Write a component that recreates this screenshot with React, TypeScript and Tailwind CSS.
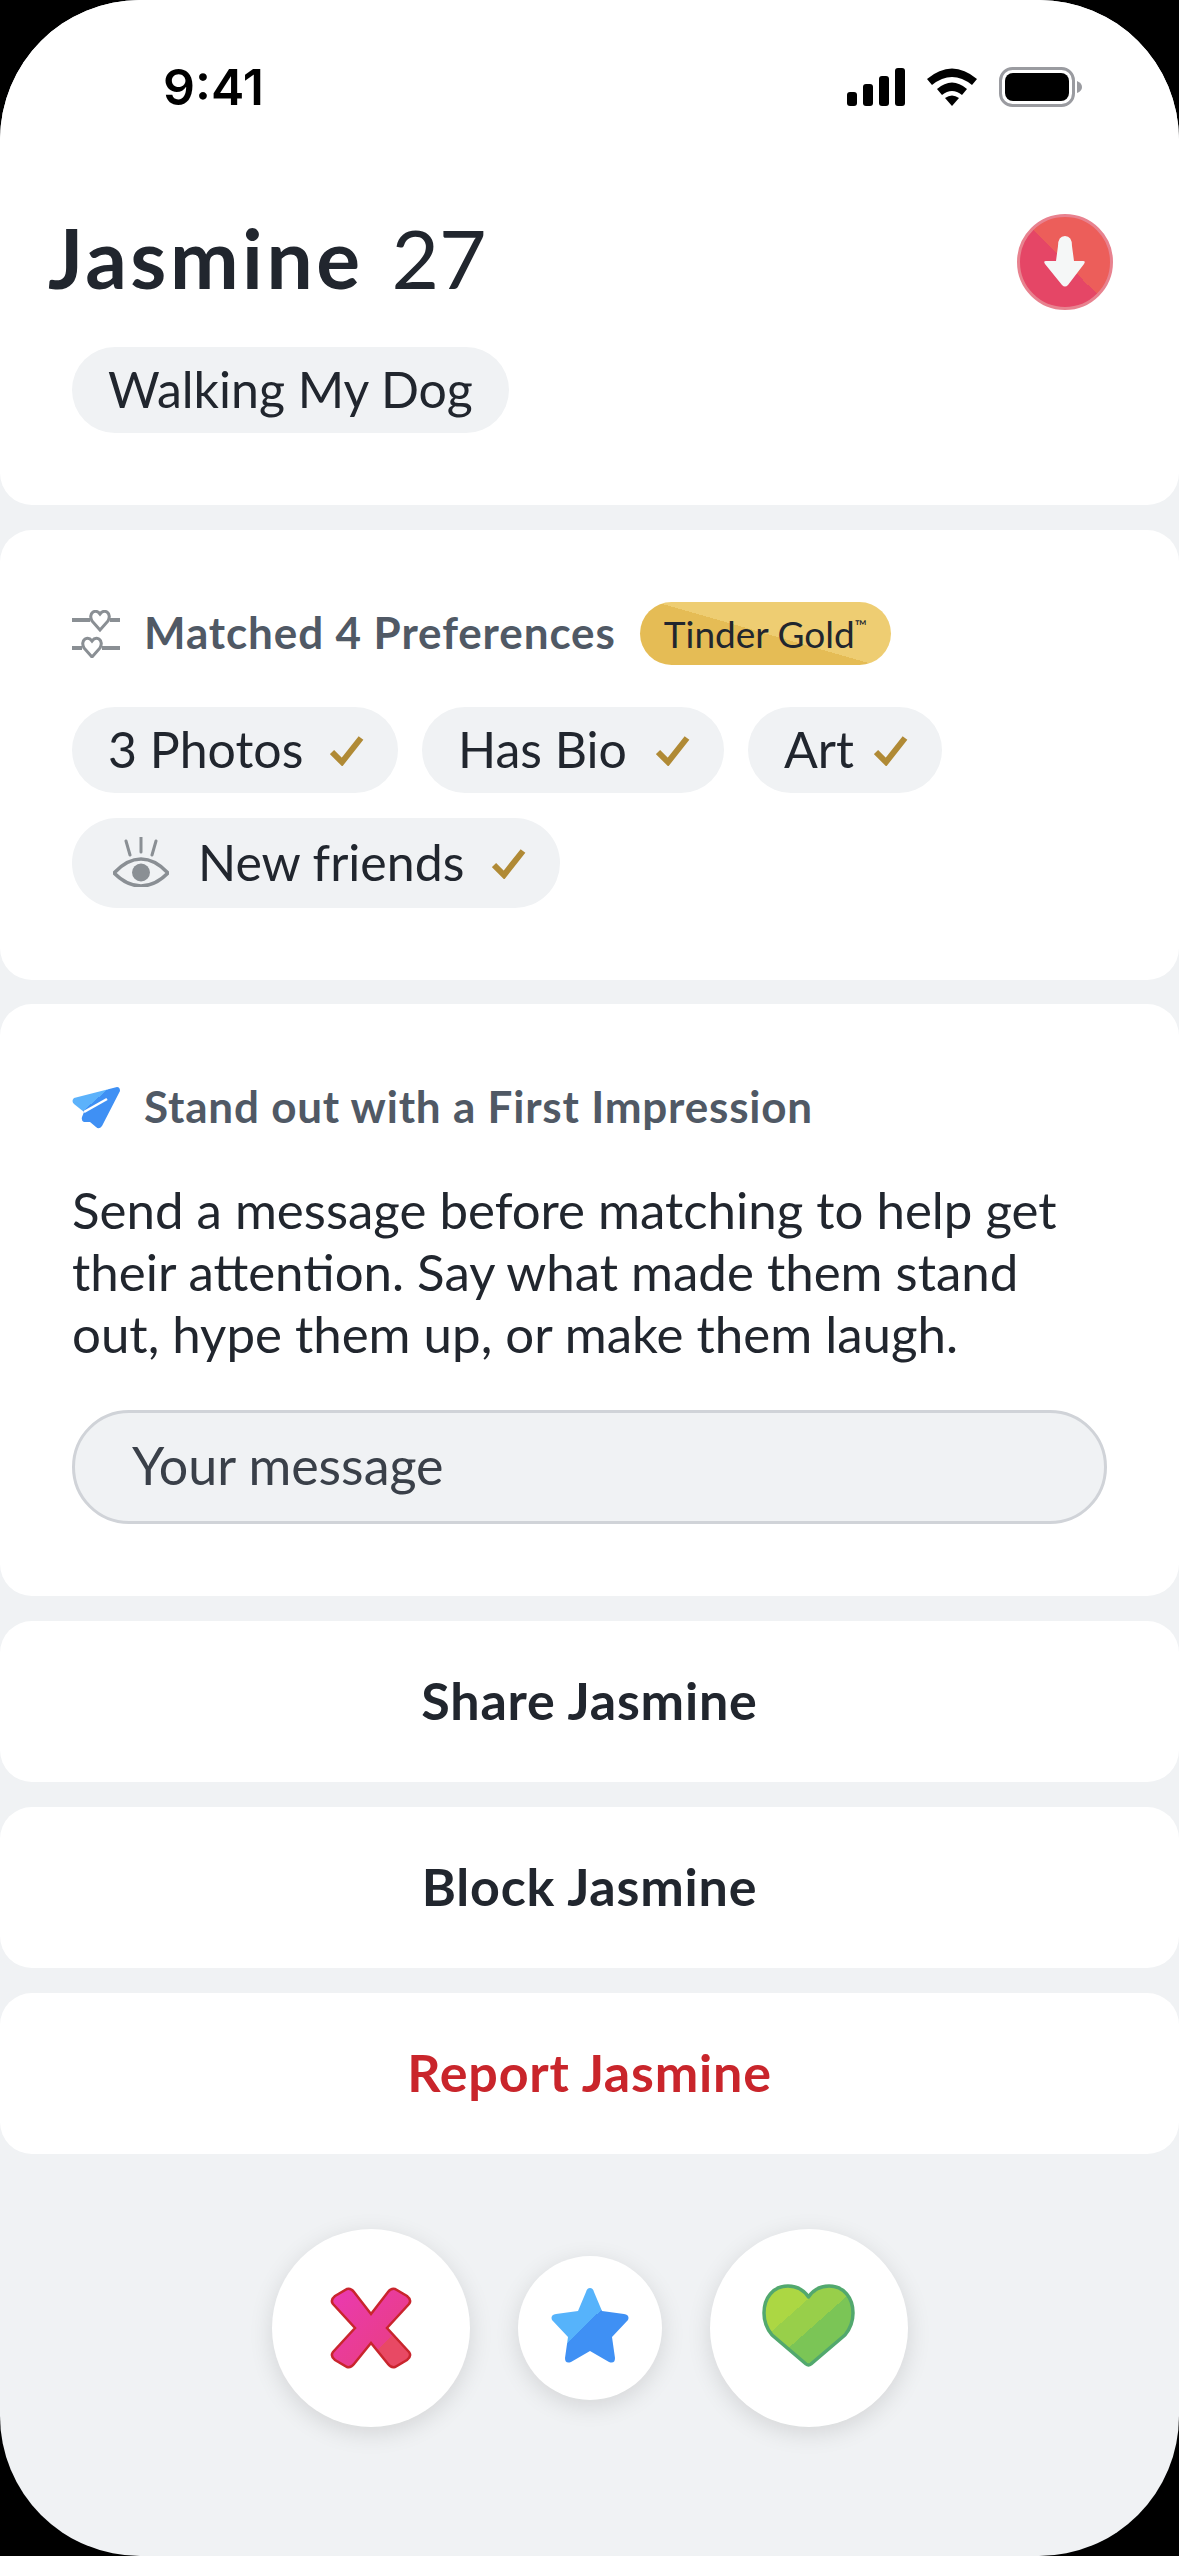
import React from 'react';

const font = "font-['Lato','Noto_Sans',sans-serif]";

const Check = () => (
  <svg width="34" height="30" viewBox="0 0 34 30" fill="none" className="mt-[4px] shrink-0">
    <path d="M2 16 L12 26 L31 2" stroke="#b08a35" strokeWidth="6" />
  </svg>
);

const StatusBar = () => (
  <div className="flex h-[58px] items-center justify-between pl-[163px] pr-[97px]">
    <span className="font-['Inter',sans-serif] text-[50px] font-semibold leading-none text-black">9:41</span>
    <div className="flex items-center gap-[22px]">
      <svg width="58" height="38" viewBox="0 0 58 38">
        <rect x="0" y="24" width="10" height="14" rx="3" />
        <rect x="16" y="16" width="10" height="22" rx="3" />
        <rect x="32" y="8" width="10" height="30" rx="3" />
        <rect x="48" y="0" width="10" height="38" rx="3" />
      </svg>
      <svg width="50" height="38" viewBox="0 0 50 38">
        <path d="M0 11 Q25 -10 50 11 L45 17 Q25 1 5 17 Z" />
        <path d="M10 21 Q25 8 40 21 L35 27 Q25 19 15 27 Z" />
        <path d="M18 30 Q25 25 32 30 L25 38 Z" />
      </svg>
      <svg width="83" height="40" viewBox="0 0 83 40">
        <rect x="1.5" y="1.5" width="73" height="37" rx="12" fill="none" stroke="#9a9ba0" strokeWidth="3" />
        <rect x="6" y="6" width="64" height="28" rx="8" />
        <path d="M78 14 Q83 16 83 20 Q83 24 78 26 Z" fill="#9a9ba0" />
      </svg>
    </div>
  </div>
);

const ArrowBadge = () => (
  <svg width="96" height="96" viewBox="0 0 96 96">
    <defs>
      <linearGradient id="arrowSplit" x1="0.14" y1="0.14" x2="0.86" y2="0.86" gradientTransform="rotate(90 0.5 0.5)">
        <stop offset="0.5" stopColor="#ec5e5a" />
        <stop offset="0.5" stopColor="#e54666" />
      </linearGradient>
    </defs>
    <circle cx="48" cy="48" r="46.5" fill="url(#arrowSplit)" stroke="#e8828f" strokeWidth="3" />
    <path
      d="M41 32 Q41 22 48 22 Q55 22 55 32 L57 47 L66 47 Q69 47 67 50 L51 71 Q48 74 45 71 L28 50 Q26 47 29 47 L39 47 Z"
      fill="#f5f7f7"
    />
  </svg>
);

const SliderHearts = () => (
  <svg width="48" height="48" viewBox="0 0 48 48" fill="none" stroke="#8a8f94" strokeWidth="3">
    <path d="M0 10 H18 M38 10 H48" strokeWidth="4" />
    <path d="M28 20 L20 11 Q17 5 21 2 Q25 0 28 4 Q31 0 35 2 Q39 5 36 11 Z" />
    <path d="M0 38 H10 M30 38 H48" strokeWidth="4" />
    <path d="M20 47 L12 38 Q9 32 13 29 Q17 27 20 31 Q23 27 27 29 Q31 32 28 38 Z" />
  </svg>
);

const Eye = () => (
  <svg width="56" height="50" viewBox="0 0 56 50" fill="none" className="shrink-0">
    <path d="M13 4 L17 18 M28 0 V15 M43 4 L39 18" stroke="#8a8f94" strokeWidth="3" strokeLinecap="round" />
    <path d="M1 36 Q14 22 28 22 Q42 22 55 36 Q42 49 28 49 Q14 49 1 36 Z" stroke="#8a8f94" strokeWidth="3.5" />
    <circle cx="28" cy="35.5" r="9" fill="#8a8f94" />
  </svg>
);

const PlaneIcon = () => (
  <svg width="48" height="42" viewBox="0 0 48 42">
    <defs>
      <linearGradient id="planeFill" x1="0" y1="0" x2="1" y2="1">
        <stop offset="0.4" stopColor="#5cb2fb" />
        <stop offset="0.4" stopColor="#3f90f4" />
      </linearGradient>
    </defs>
    <path
      d="M45 0 Q48 0 48 4 L30 39 Q27 43 24 40 L18 35 L12 35 Q9 34 10 30 L12 25 L2 17 Q-1 14 2 11 Z"
      fill="url(#planeFill)"
    />
    <path d="M12 25 L35 12" stroke="#fff" strokeWidth="2.5" />
  </svg>
);

const Chip = ({ children, className = '' }: { children: React.ReactNode; className?: string }) => (
  <div className={`flex items-center rounded-full bg-[#f0f2f4] pb-[3px] text-[50px] leading-none text-[#21262e] ${className}`}>
    {children}
  </div>
);

const ActionRow = ({ label, className = 'text-[#21262e]' }: { label: string; className?: string }) => (
  <button className={`flex h-[161px] w-full items-center justify-center rounded-[32px] bg-white pb-[4px] text-[52px] font-bold tracking-[0.8px] ${className}`}>
    {label}
  </button>
);

const App: React.FC = () => {
  return (
    <div className="h-[2556px] w-[1179px] bg-black">
      <div className={`h-full w-full overflow-hidden rounded-[140px] bg-[#f0f2f4] ${font}`}>
        <section className="h-[505px] rounded-b-[32px] bg-white pt-[58px]">
          <StatusBar />
          <div className="mt-[98px] flex h-[96px] items-center justify-between pl-[48px] pr-[66px] text-[#21262e]">
            <div className="flex items-baseline gap-[28px] pb-[11px]">
              <span className="text-[82px] font-bold leading-none tracking-[3.5px]">Jasmine</span>
              <span className="text-[82px] leading-none">27</span>
            </div>
            <ArrowBadge />
          </div>
          <Chip className="ml-[72px] mt-[37px] h-[86px] w-fit px-[36px]">Walking My Dog</Chip>
        </section>

        <section className="mt-[25px] h-[450px] rounded-[32px] bg-white px-[72px] pt-[72px]">
          <div className="flex h-[63px] items-center">
            <SliderHearts />
            <span className="ml-[24px] pb-[4px] text-[44px] font-bold tracking-[0.9px] text-[#505965]">Matched 4 Preferences</span>
            <span className="ml-[24px] flex h-[63px] w-[251px] items-center justify-center rounded-full bg-[linear-gradient(16deg,#e5bc55_50%,#eecd72_50%)] text-[37px] text-[#21262e]">
              Tinder Gold<sup className="text-[16px]">™</sup>
            </span>
          </div>
          <div className="mt-[42px] flex gap-[24px]">
            <Chip className="h-[86px] w-[326px] justify-between pl-[36px] pr-[34px]">3 Photos<Check /></Chip>
            <Chip className="h-[86px] w-[302px] justify-between pl-[36px] pr-[34px]">Has Bio<Check /></Chip>
            <Chip className="h-[86px] w-[194px] justify-between pl-[36px] pr-[34px]">Art<Check /></Chip>
          </div>
          <Chip className="mt-[25px] h-[90px] w-[488px] pl-[41px] pr-[34px]">
            <Eye />
            <span className="ml-[29px] flex-1">New friends</span>
            <Check />
          </Chip>
        </section>

        <section className="mt-[24px] h-[592px] rounded-[32px] bg-white px-[72px] pt-[83px]">
          <div className="flex h-[42px] items-center">
            <PlaneIcon />
            <span className="ml-[24px] pb-[4px] text-[44px] font-bold tracking-[0.8px] text-[#505965]">Stand out with a First Impression</span>
          </div>
          <p className="mt-[50px] text-[51px] leading-[62px] text-[#21262e]">
            Send a message before matching to help get their attention. Say what made them stand out, hype them up, or make them laugh.
          </p>
          <div className="mt-[45px] flex h-[114px] items-center rounded-full border-[3px] border-[#d0d3d8] bg-[#f0f2f4] pb-[4px] pl-[57px] text-[52px] text-[#3a4049]">
            Your message
          </div>
        </section>

        <div className="mt-[25px] flex flex-col gap-[25px]">
          <ActionRow label="Share Jasmine" />
          <ActionRow label="Block Jasmine" />
          <ActionRow label="Report Jasmine" className="text-[#c9252b]" />
        </div>

        <div className="mt-[75px] flex items-center justify-center gap-[48px]">
          <button className="flex h-[198px] w-[198px] items-center justify-center rounded-full bg-white shadow-[0_6px_24px_rgba(0,0,0,0.12)]">
            <svg width="82" height="82" viewBox="-1 -1 82 82">
              <defs>
                <linearGradient id="xFill" x1="0" y1="0" x2="1" y2="1">
                  <stop offset="0" stopColor="#ea3ab2" />
                  <stop offset="0.68" stopColor="#e93d8c" />
                  <stop offset="0.68" stopColor="#e84964" />
                </linearGradient>
              </defs>
              <path
                d="M40 26 L57 4 Q60 0 64 1 L76 8 Q81 12 78 16 L56 40 L78 64 Q81 68 76 72 L64 79 Q60 80 57 76 L40 55 L23 76 Q20 80 16 79 L4 72 Q-1 68 2 64 L24 40 L2 16 Q-1 12 4 8 L16 1 Q20 0 23 4 Z"
                fill="url(#xFill)"
                stroke="#c9252d"
                strokeWidth="2.5"
              />
            </svg>
          </button>
          <button className="flex h-[144px] w-[144px] items-center justify-center rounded-full bg-white shadow-[0_6px_24px_rgba(0,0,0,0.12)]">
            <svg width="78" height="76" viewBox="0 0 78 76" className="mb-[4px]">
              <defs>
                <linearGradient id="starFill" x1="0" y1="0" x2="1" y2="1">
                  <stop offset="0.47" stopColor="#56b3fb" />
                  <stop offset="0.47" stopColor="#3f90f4" />
                </linearGradient>
              </defs>
              <path
                d="M39 0 Q42 0 43 4 L51 23 L73 26 Q79 27 77 32 L61 49 L64 70 Q64 76 58 74 L39 63 L20 74 Q14 76 14 70 L17 49 L1 32 Q-1 27 5 26 L27 23 L35 4 Q36 0 39 0 Z"
                fill="url(#starFill)"
              />
            </svg>
          </button>
          <button className="flex h-[198px] w-[198px] items-center justify-center rounded-full bg-white shadow-[0_6px_24px_rgba(0,0,0,0.12)]">
            <svg width="93" height="83" viewBox="0 0 93 83" className="mb-[6px]">
              <defs>
                <linearGradient id="heartFill" x1="0" y1="0" x2="1" y2="1">
                  <stop offset="0.33" stopColor="#acd743" />
                  <stop offset="0.33" stopColor="#98cf4a" />
                  <stop offset="0.53" stopColor="#98cf4a" />
                  <stop offset="0.53" stopColor="#7bc556" />
                </linearGradient>
              </defs>
              <path
                d="M46.5 13 C41 5 34 2 26 2 C11 2 2 14 2 29 C2 38 5 45 10 51 L44 80 Q46.5 82 49 80 L83 51 C88 45 91 38 91 29 C91 14 82 2 67 2 C59 2 52 5 46.5 13 Z"
                fill="url(#heartFill)"
                stroke="#52a86e"
                strokeWidth="3.5"
                strokeLinejoin="round"
              />
            </svg>
          </button>
        </div>
      </div>
    </div>
  );
};

export default App;
